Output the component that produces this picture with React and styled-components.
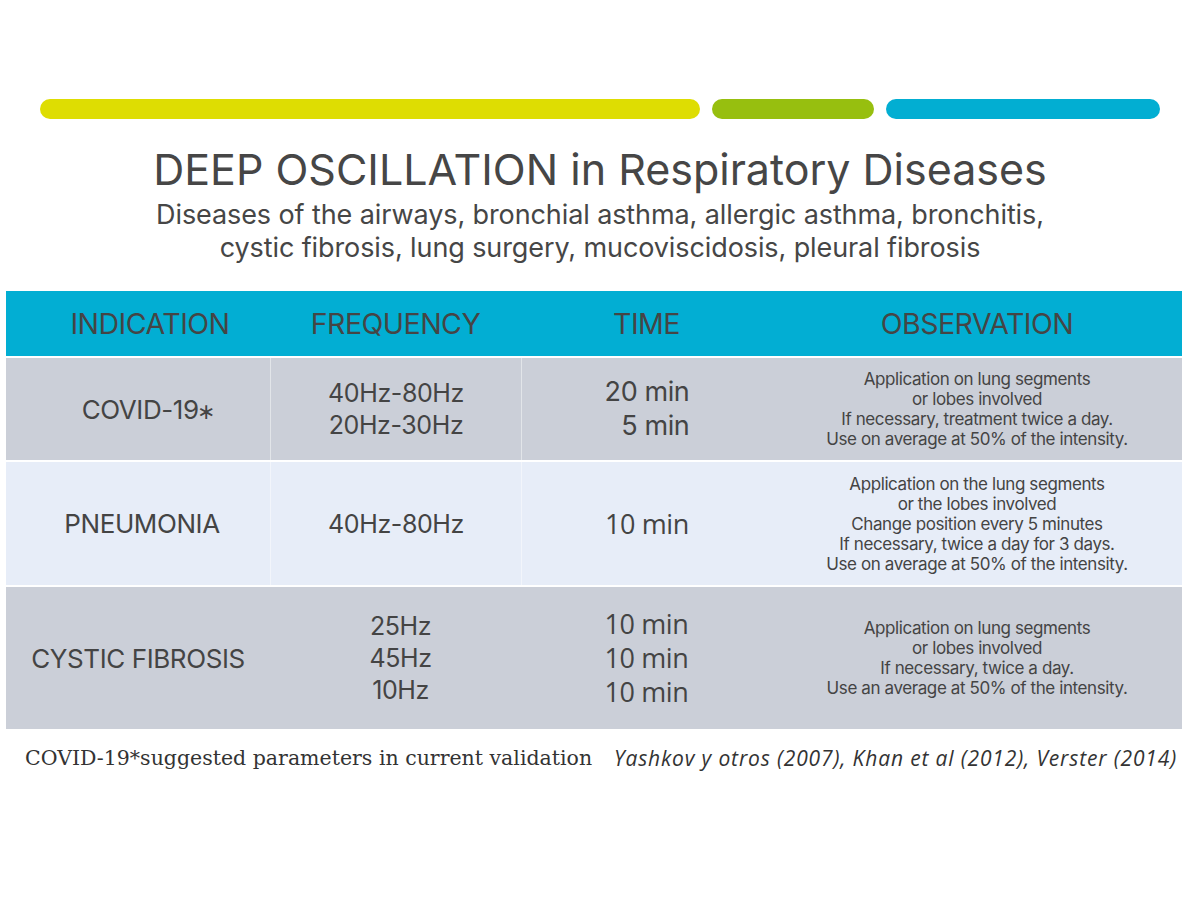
import React from "react";
import styled, { createGlobalStyle } from "styled-components";

const Global = createGlobalStyle`
  html, body { margin: 0; padding: 0; background: #ffffff; }
  body { font-family: Inter, "Liberation Sans", sans-serif; color: #444444; }
`;

const Page = styled.div`
  width: 1200px;
  height: 900px;
  padding-top: 99px;
  box-sizing: border-box;
  display: flex;
  flex-direction: column;
`;

const Bars = styled.div`
  display: flex;
  gap: 12px;
  margin-left: 40px;
  width: 1120px;
`;

const Bar = styled.div`
  width: ${(p) => p.$w}px;
  height: 20px;
  border-radius: 10px;
  background: ${(p) => p.$color};
`;

const Title = styled.h1`
  margin: 25px 0 0;
  font-family: Inter, sans-serif;
  font-weight: 400;
  font-size: 43px;
  line-height: 50px;
  letter-spacing: 0px;
  text-align: center;
  color: #464646;
`;

const Subtitle = styled.p`
  margin: 4px 0 0;
  font-family: Inter, sans-serif;
  font-size: 27px;
  line-height: 33px;
  letter-spacing: -0.1px;
  text-align: center;
  color: #464646;
`;

const Table = styled.div`
  margin: 27px 0 0 6px;
  width: 1176px;
  display: grid;
  grid-template-columns: 264px 251px 251px 410px;
  grid-template-rows: 65px 102px 123px 142px;
  row-gap: 2px;
  background: #ffffff;
`;

const HeadCell = styled.div`
  background: #02aed3;
  display: flex;
  align-items: center;
  justify-content: center;
  padding-left: ${(p) => p.$shift || 0}px;
  font-family: Inter, sans-serif;
  font-size: 28.5px;
  letter-spacing: -0.5px;
  color: #454545;
`;

const Cell = styled.div`
  background: ${(p) => (p.$light ? "#e7edf8" : "#cbcfd8")};
  display: flex;
  flex-direction: column;
  align-items: center;
  justify-content: center;
  text-align: center;
  padding-left: ${(p) => p.$shift || 0}px;
  border-left: ${(p) => (p.$divider ? "1px solid rgba(255,255,255,0.45)" : "none")};
  color: #444444;
`;

const Label = styled.div`
  font-family: Inter, sans-serif;
  font-size: 26px;
  letter-spacing: -0.4px;
`;

const Star = styled.span`
  font-size: 22px;
  margin-left: -2px;
`;

const Freq = styled.div`
  font-family: Inter, sans-serif;
  font-size: 25px;
  line-height: 32px;
  letter-spacing: -0.4px;
`;

const TimeStack = styled.div`
  display: flex;
  flex-direction: column;
  align-items: flex-end;
`;

const Time = styled.div`
  font-family: ${(p) => (p.$alt ? '"Open Sans", sans-serif' : "Inter, sans-serif")};
  font-size: 27px;
  line-height: 34px;
  letter-spacing: -0.4px;
`;

const Obs = styled.div`
  font-family: Inter, sans-serif;
  font-size: 17px;
  line-height: 20px;
  letter-spacing: -0.4px;
`;

const Footer = styled.div`
  display: flex;
  justify-content: space-between;
  align-items: center;
  margin: 15px 23px 0 25px;
`;

const Note = styled.span`
  font-family: "DejaVu Serif", serif;
  font-size: 20.5px;
  color: #333333;
`;

const Refs = styled.span`
  font-family: "Open Sans", sans-serif;
  font-style: italic;
  font-size: 21px;
  color: #333333;
  letter-spacing: 0.85px;
`;

export default function App() {
  return (
    <Page>
      <Global />
      <Bars>
        <Bar $w={660} $color="#dedd02" />
        <Bar $w={162} $color="#97bf0f" />
        <Bar $w={274} $color="#02aed2" />
      </Bars>
      <Title>DEEP OSCILLATION in Respiratory Diseases</Title>
      <Subtitle>
        Diseases of the airways, bronchial asthma, allergic asthma, bronchitis,
        <br />
        cystic fibrosis, lung surgery, mucoviscidosis, pleural fibrosis
      </Subtitle>
      <Table>
        <HeadCell $shift={24}>INDICATION</HeadCell>
        <HeadCell>FREQUENCY</HeadCell>
        <HeadCell>TIME</HeadCell>
        <HeadCell>OBSERVATION</HeadCell>

        <Cell $shift={20}>
          <Label>
            COVID-19<Star>∗</Star>
          </Label>
        </Cell>
        <Cell $divider>
          <Freq>40Hz-80Hz</Freq>
          <Freq>20Hz-30Hz</Freq>
        </Cell>
        <Cell $divider>
          <TimeStack>
            <Time>20 min</Time>
            <Time>5 min</Time>
          </TimeStack>
        </Cell>
        <Cell>
          <Obs>Application on lung segments</Obs>
          <Obs>or lobes involved</Obs>
          <Obs>If necessary, treatment twice a day.</Obs>
          <Obs>Use on average at 50% of the intensity.</Obs>
        </Cell>

        <Cell $light $shift={8}>
          <Label>PNEUMONIA</Label>
        </Cell>
        <Cell $light $divider>
          <Freq>40Hz-80Hz</Freq>
        </Cell>
        <Cell $light $divider>
          <Time $alt>10 min</Time>
        </Cell>
        <Cell $light>
          <Obs>Application on the lung segments</Obs>
          <Obs>or the lobes involved</Obs>
          <Obs>Change position every 5 minutes</Obs>
          <Obs>If necessary, twice a day for 3 days.</Obs>
          <Obs>Use on average at 50% of the intensity.</Obs>
        </Cell>

        <Cell>
          <Label>CYSTIC FIBROSIS</Label>
        </Cell>
        <Cell $shift={10}>
          <Freq>25Hz</Freq>
          <Freq>45Hz</Freq>
          <Freq>10Hz</Freq>
        </Cell>
        <Cell>
          <Time $alt>10 min</Time>
          <Time $alt>10 min</Time>
          <Time $alt>10 min</Time>
        </Cell>
        <Cell>
          <Obs>Application on lung segments</Obs>
          <Obs>or lobes involved</Obs>
          <Obs>If necessary, twice a day.</Obs>
          <Obs>Use an average at 50% of the intensity.</Obs>
        </Cell>
      </Table>
      <Footer>
        <Note>COVID-19*suggested parameters in current validation</Note>
        <Refs>Yashkov y otros (2007), Khan et al (2012), Verster (2014)</Refs>
      </Footer>
    </Page>
  );
}
